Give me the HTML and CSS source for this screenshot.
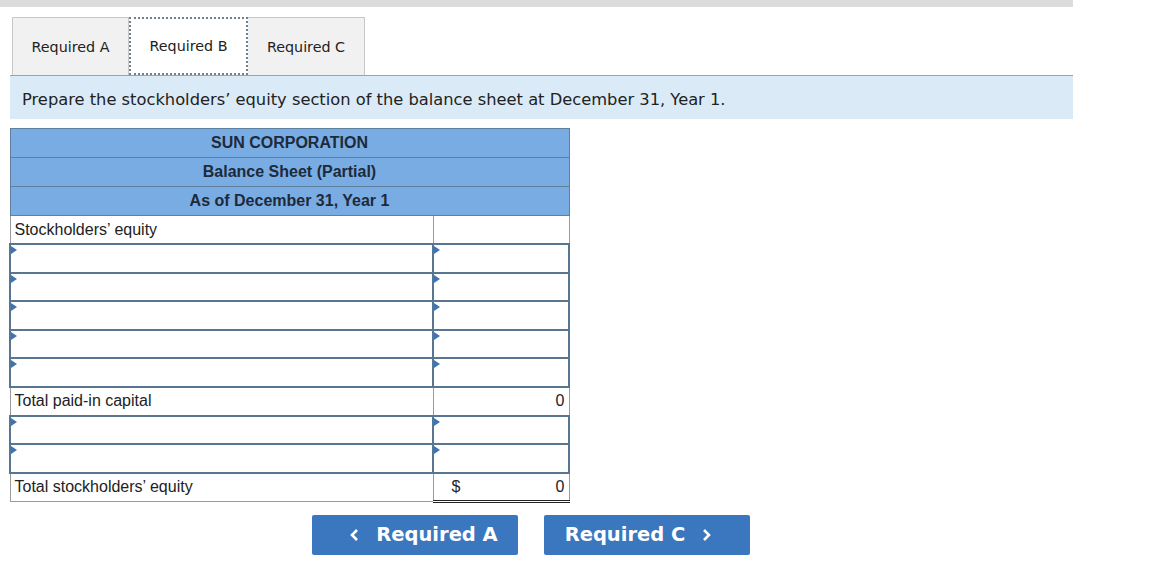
FILE: index.html
```html
<!DOCTYPE html>
<html>
<head>
<meta charset="utf-8">
<link rel="stylesheet" href="styles.css">
</head>
<body>
<div class="page">
  <div class="topbar"></div>
  <div class="tabs">
    <div class="tab">Required A</div>
    <div class="tab active">Required B</div>
    <div class="tab">Required C</div>
  </div>
  <div class="instructions">Prepare the stockholders’ equity section of the balance sheet at December 31, Year 1.</div>
  <table class="sheet">
    <tr class="hd"><td colspan="2">SUN CORPORATION</td></tr>
    <tr class="hd"><td colspan="2">Balance Sheet (Partial)</td></tr>
    <tr class="hd"><td colspan="2">As of December 31, Year 1</td></tr>
    <tr><td class="lbl">Stockholders’ equity</td><td class="val"></td></tr>
    <tr><td class="inp"></td><td class="inp"></td></tr>
    <tr><td class="inp"></td><td class="inp"></td></tr>
    <tr><td class="inp"></td><td class="inp"></td></tr>
    <tr><td class="inp"></td><td class="inp"></td></tr>
    <tr><td class="inp"></td><td class="inp"></td></tr>
    <tr><td class="lbl">Total paid-in capital</td><td class="val num">0</td></tr>
    <tr><td class="inp"></td><td class="inp"></td></tr>
    <tr><td class="inp"></td><td class="inp"></td></tr>
    <tr><td class="lbl">Total stockholders’ equity</td><td class="val num total"><span class="dollar">$</span>0</td></tr>
  </table>
  <div class="nav">
    <button class="btn"><svg class="chev" width="10" height="14" viewBox="0 0 10 14"><polyline points="8,2 3,7 8,12" fill="none" stroke="#fff" stroke-width="2.6"/></svg>Required A</button>
    <button class="btn">Required C<svg class="chev" width="10" height="14" viewBox="0 0 10 14"><polyline points="2,2 7,7 2,12" fill="none" stroke="#fff" stroke-width="2.6"/></svg></button>
  </div>
</div>
</body>
</html>
```

FILE: styles.css
```css
html, body {
  margin: 0;
  padding: 0;
  background: #ffffff;
}
.page {
  width: 1073px;
  font-family: "DejaVu Sans", Verdana, sans-serif;
  color: #222;
}
.topbar {
  height: 7px;
  background: #dcdcdc;
}
.tabs {
  display: flex;
  margin-top: 10px;
  padding-left: 12px;
  height: 58px;
}
.tab {
  box-sizing: border-box;
  width: 117px;
  height: 58px;
  display: flex;
  align-items: center;
  justify-content: center;
  font-size: 14.3px;
  background: #f1f1f1;
  border: 1px solid #c8c8c8;
  border-bottom: none;
  color: #222;
}
.tab + .tab {
  border-left: none;
}
.tab.active {
  background: #ffffff;
  border: 2px dotted #6f7f8f;
  width: 119px;
}
.instructions {
  margin-left: 10px;
  height: 43px;
  border-top: 1px solid #9aa3ad;
  background: #dbeaf7;
  font-size: 16.3px;
  line-height: 47px;
  padding-left: 12px;
  color: #222;
  overflow: hidden;
}
.sheet {
  margin: 9px 0 0 9px;
  border-collapse: collapse;
  width: 561px;
  font-family: "Liberation Sans", Arial, sans-serif;
  font-size: 16px;
  color: #222;
}
.sheet td {
  height: 28.6px;
  padding: 0 4px;
  box-sizing: border-box;
}
.hd td {
  background: #7aace4;
  text-align: center;
  font-weight: bold;
  color: #1d2a3a;
  border: 1px solid #5f7f9f;
  height: 29px;
}
.lbl {
  border: 1px solid #9a9a9a;
  width: 423px;
}
.val {
  border: 1px solid #9a9a9a;
}
.num {
  text-align: right;
}
.total {
  border-bottom: 3px double #222;
}
.dollar {
  float: left;
  margin-left: 14px;
}
.inp {
  border: 2px solid #587592;
  position: relative;
  background: #ffffff;
}
.inp::before {
  content: "";
  position: absolute;
  left: 0;
  top: 1px;
  border-top: 4px solid transparent;
  border-bottom: 4px solid transparent;
  border-left: 6px solid #3f74b4;
}
.nav {
  display: flex;
  gap: 26px;
  margin: 12px 0 0 312px;
}
.btn {
  width: 206px;
  height: 40px;
  background: #3a77bf;
  color: #ffffff;
  border: none;
  border-radius: 2px;
  font-family: "DejaVu Sans", Verdana, sans-serif;
  font-weight: bold;
  font-size: 19.5px;
  padding: 0;
  display: flex;
  align-items: center;
  justify-content: center;
}
.chev {
  margin: 0 17px;
}
```
